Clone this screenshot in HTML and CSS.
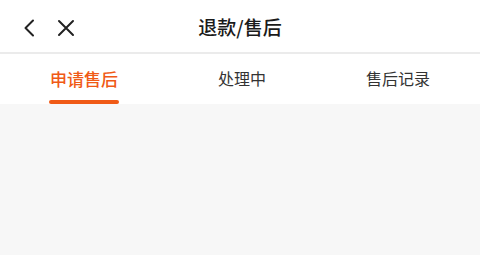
FILE: index.html
```html
<!DOCTYPE html>
<html lang="zh">
<head>
<meta charset="utf-8">
<link rel="stylesheet" href="styles.css">
</head>
<body>
<div class="page">
  <header class="nav">
    <div class="nav-left">
      <svg class="icon" width="12" height="18" viewBox="0 0 12 18"><path d="M10 1.5 L2.5 9 L10 16.5" fill="none" stroke="#222" stroke-width="2" stroke-linecap="round" stroke-linejoin="round"/></svg>
      <svg class="icon close" width="18" height="18" viewBox="0 0 18 18"><path d="M2 2 L16 16 M16 2 L2 16" fill="none" stroke="#222" stroke-width="2" stroke-linecap="round"/></svg>
    </div>
    <div class="nav-title">退款/售后</div>
  </header>
  <nav class="tabs">
    <div class="tab active">申请售后</div>
    <div class="tab">处理中</div>
    <div class="tab">售后记录</div>
  </nav>
  <main class="content"></main>
</div>
</body>
</html>
```
FILE: styles.css
```css
* { box-sizing: border-box; }
html, body { margin: 0; padding: 0; }
body {
  font-family: "Noto Sans CJK SC", "Noto Sans", sans-serif;
  background: #f7f7f7;
  color: #222;
}
.page { width: 480px; height: 255px; display: flex; flex-direction: column; }
.nav {
  position: relative;
  height: 54px;
  background: #fff;
  border-bottom: 2px solid #ebebeb;
  display: flex;
  align-items: center;
  justify-content: center;
}
.nav-left {
  position: absolute;
  left: 23px;
  top: 19px;
  display: flex;
  align-items: center;
  gap: 22px;
}
.icon { display: block; }
.nav-title {
  font-size: 19px;
  font-weight: 500;
  color: #1a1a1a;
}
.tabs {
  height: 50px;
  background: #fff;
  display: flex;
  justify-content: space-around;
}
.tab {
  position: relative;
  display: flex;
  align-items: center;
  font-size: 16px;
  color: #333;
  padding-bottom: 2px;
}
.tab.active {
  font-size: 17px;
  font-weight: 500;
  color: #f05a16;
}
.tab.active::after {
  content: "";
  position: absolute;
  left: -1px;
  right: -1px;
  bottom: 0;
  height: 4px;
  border-radius: 2px;
  background: #f05a16;
}
.content { flex: 1; background: #f7f7f7; }
```
